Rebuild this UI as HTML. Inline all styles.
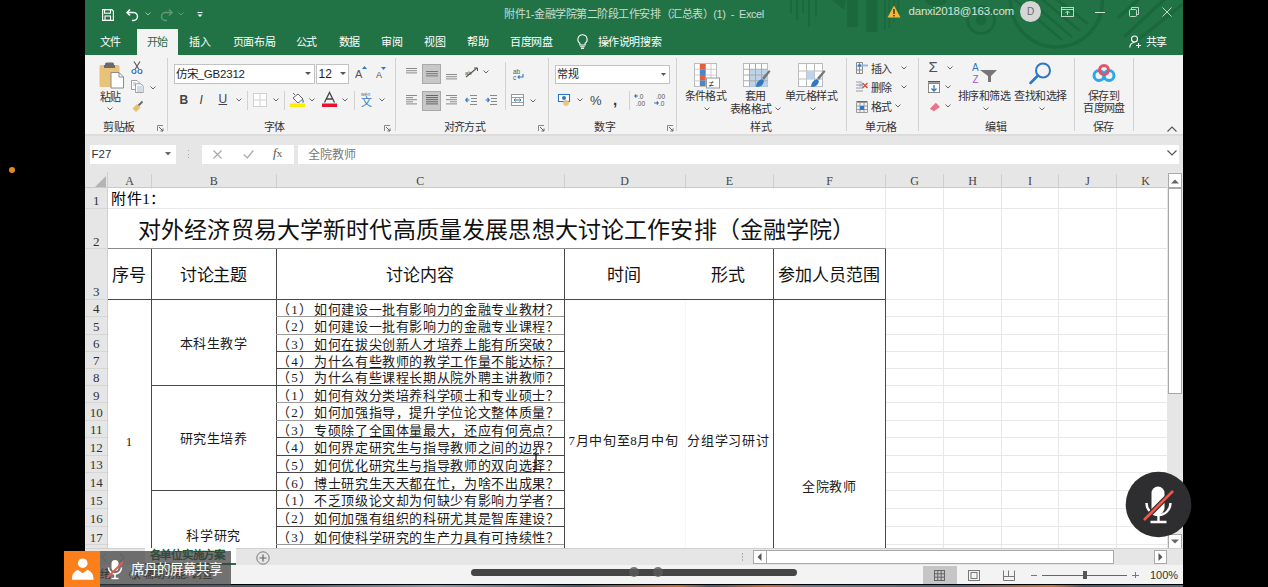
<!DOCTYPE html><html lang="zh-CN"><head><meta charset="utf-8"><style>
*{margin:0;padding:0;box-sizing:border-box}
html,body{width:1268px;height:587px;overflow:hidden}
body{background:#000;position:relative;font-family:"Liberation Sans",sans-serif;color:#262626}
.a{position:absolute}
.t{white-space:nowrap}
.ser{font-family:"Liberation Serif",serif}
svg{position:absolute;overflow:visible}
</style></head><body>
<div class="a" style="left:9px;top:167px;width:6px;height:6px;border-radius:50%;background:#e58a1c"></div>
<div class="a" style="left:85px;top:0px;width:1098px;height:55px;background:#217346"></div>
<svg style="left:0;top:0" width="1183" height="55" viewBox="0 0 1183 55">
<defs><clipPath id="tb"><rect x="85" y="0" width="1098" height="55"/></clipPath></defs>
<g clip-path="url(#tb)" fill="#1c683d">
<rect x="790" y="0" width="2" height="13"/><rect x="796" y="0" width="2.2" height="20"/><rect x="802" y="0" width="2" height="13"/><rect x="808" y="0" width="2" height="27"/><rect x="815" y="0" width="2" height="17"/>
<path d="M832 0h14l-2 10z"/>
<rect x="847" y="0" width="11" height="27"/><rect x="866" y="0" width="11.5" height="32"/>
<rect x="884" y="0" width="1.6" height="30"/><rect x="888.5" y="0" width="1.6" height="28"/><rect x="893" y="0" width="1.6" height="22"/><rect x="897.5" y="0" width="1.6" height="18"/>
<ellipse cx="936" cy="0" rx="11" ry="6"/>
<circle cx="981" cy="20" r="5.3"/>
</g>
<g clip-path="url(#tb)" fill="none" stroke="#1c683d">
<circle cx="981" cy="20" r="13.5" stroke-width="3"/>
<circle cx="1056.5" cy="1" r="46" stroke-width="3.5"/>
<path d="M1013 -2L1062 40M1022 -6L1072 37M1031 -10L1080 31M1040 -14L1088 24" stroke-width="2.6"/>
<path d="M1142 -4L1118 18M1168 -4L1124 37M1183 4L1135 42" stroke-width="3.5"/>
</g></svg>
<svg style="left:102px;top:9px" width="12" height="12" viewBox="0 0 12 12"><path d="M0.6 0.6h9.2l1.6 1.6v9.2H0.6z" fill="none" stroke="#fff" stroke-width="1.2"/><rect x="2.5" y="0.6" width="6" height="3.6" fill="none" stroke="#fff" stroke-width="1.1"/><rect x="3" y="7" width="5.5" height="4.4" fill="none" stroke="#fff" stroke-width="1.1"/></svg>
<svg style="left:126px;top:8px" width="13" height="13" viewBox="0 0 13 13"><path d="M4 1.5L1 4.5l3 3" fill="none" stroke="#fff" stroke-width="1.5"/><path d="M1.5 4.5h6a4 4 0 0 1 0 8h-1.5" fill="none" stroke="#fff" stroke-width="1.5"/></svg>
<svg style="left:145px;top:12px" width="6" height="4" viewBox="0 0 6 4"><path d="M0.5 0.5l2.5 2.5 2.5-2.5" fill="none" stroke="#9fc5ad" stroke-width="1"/></svg>
<svg style="left:160px;top:8px" width="13" height="13" viewBox="0 0 13 13"><path d="M9 1.5l3 3-3 3" fill="none" stroke="#5e9a78" stroke-width="1.5"/><path d="M11.5 4.5h-6a4 4 0 0 0 0 8h1.5" fill="none" stroke="#5e9a78" stroke-width="1.5"/></svg>
<svg style="left:178px;top:12px" width="6" height="4" viewBox="0 0 6 4"><path d="M0.5 0.5l2.5 2.5 2.5-2.5" fill="none" stroke="#5e9a78" stroke-width="1"/></svg>
<svg style="left:197px;top:12px" width="6" height="6" viewBox="0 0 6 6"><rect x="0.5" y="0" width="5" height="1" fill="#fff"/><path d="M0.5 2.5h5L3 5z" fill="#fff"/></svg>
<div class="a t" style="left:504px;top:9px;font-size:11px;line-height:11px;color:#c9ddd0;letter-spacing:-0.45px">附件1-金融学院第二阶段工作安排（汇总表）(1)&nbsp; -&nbsp; Excel</div>
<svg style="left:887px;top:5px" width="14" height="13" viewBox="0 0 14 13"><path d="M7 0.5L13.5 12.5H0.5z" fill="#f5b63c"/><rect x="6.3" y="4" width="1.4" height="5" fill="#3a2a00"/><rect x="6.3" y="10" width="1.4" height="1.4" fill="#3a2a00"/></svg>
<div class="a t" style="left:908.5px;top:6px;font-size:11.5px;line-height:11.5px;color:#d5e5da;letter-spacing:-0.2px">danxi2018@163.com</div>
<div class="a" style="left:1020px;top:1px;width:21px;height:21px;border-radius:50%;background:#d6d6d6;color:#6a6a6a;font-size:10px;line-height:21px;text-align:center">D</div>
<svg style="left:1061px;top:7px" width="13" height="10" viewBox="0 0 13 10"><rect x="0.5" y="0.5" width="12" height="9" fill="none" stroke="#d0e2d6" stroke-width="0.9" stroke-width="1"/><line x1="0.5" y1="2.5" x2="12.5" y2="2.5" stroke="#d0e2d6" stroke-width="0.9"/><path d="M6.5 8V4M4.5 6l2-2 2 2" fill="none" stroke="#d0e2d6" stroke-width="0.9"/></svg>
<div class="a" style="left:1095px;top:12px;width:10px;height:1px;background:#d0e2d6"></div>
<svg style="left:1129px;top:7px" width="10" height="10" viewBox="0 0 10 10"><rect x="0.5" y="2.5" width="7" height="7" rx="1" fill="none" stroke="#d0e2d6" stroke-width="0.9"/><path d="M2.5 2.5V0.5h7v7h-2" fill="none" stroke="#d0e2d6" stroke-width="0.9"/></svg>
<svg style="left:1162px;top:7px" width="10" height="10" viewBox="0 0 10 10"><path d="M0.5 0.5l9 9M9.5 0.5l-9 9" stroke="#d0e2d6" stroke-width="0.9"/></svg>
<div class="a" style="left:137px;top:29px;width:41px;height:26px;background:#f3f3f3"></div>
<div class="a t" style="left:99.8px;top:36.8px;font-size:11px;line-height:11px;color:#fff;letter-spacing:-0.4px">文件</div>
<div class="a t" style="left:146.5px;top:36.8px;font-size:11px;line-height:11px;color:#2b6a44;letter-spacing:-0.4px">开始</div>
<div class="a t" style="left:189.2px;top:36.8px;font-size:11px;line-height:11px;color:#fff;letter-spacing:-0.4px">插入</div>
<div class="a t" style="left:232.8px;top:36.8px;font-size:11px;line-height:11px;color:#fff;letter-spacing:-0.4px">页面布局</div>
<div class="a t" style="left:295.5px;top:36.8px;font-size:11px;line-height:11px;color:#fff;letter-spacing:-0.4px">公式</div>
<div class="a t" style="left:338.5px;top:36.8px;font-size:11px;line-height:11px;color:#fff;letter-spacing:-0.4px">数据</div>
<div class="a t" style="left:381.2px;top:36.8px;font-size:11px;line-height:11px;color:#fff;letter-spacing:-0.4px">审阅</div>
<div class="a t" style="left:424.2px;top:36.8px;font-size:11px;line-height:11px;color:#fff;letter-spacing:-0.4px">视图</div>
<div class="a t" style="left:467.2px;top:36.8px;font-size:11px;line-height:11px;color:#fff;letter-spacing:-0.4px">帮助</div>
<div class="a t" style="left:510.3px;top:36.8px;font-size:11px;line-height:11px;color:#fff;letter-spacing:-0.4px">百度网盘</div>
<div class="a t" style="left:597.5px;top:36.8px;font-size:11px;line-height:11px;color:#fff;letter-spacing:-0.4px">操作说明搜索</div>
<svg style="left:577px;top:34px" width="11" height="15" viewBox="0 0 11 15"><path d="M5.5 0.8a4.6 4.6 0 0 0-2.6 8.4V11h5.2V9.2a4.6 4.6 0 0 0-2.6-8.4z" fill="none" stroke="#fff" stroke-width="1.1"/><path d="M3.3 12.8h4.4M4 14.4h3" stroke="#fff" stroke-width="1.1"/></svg>
<svg style="left:1129px;top:35px" width="13" height="13" viewBox="0 0 13 13"><circle cx="5.5" cy="4" r="3" fill="none" stroke="#fff" stroke-width="1.1"/><path d="M0.8 12.5c0-3 2-5 4.7-5" fill="none" stroke="#fff" stroke-width="1.1"/><path d="M9.5 8v5M7 10.5h5" stroke="#fff" stroke-width="1.1"/></svg>
<div class="a t" style="left:1145.5px;top:37px;font-size:11px;line-height:11px;color:#fff;letter-spacing:-0.3px">共享</div>
<div class="a" style="left:85px;top:55px;width:1098px;height:79px;background:#f3f3f3"></div>
<div class="a" style="left:85px;top:134px;width:1098px;height:38px;background:#e6e6e6"></div>
<div class="a" style="left:85px;top:134px;width:1098px;height:1.5px;background:#dcdcdc"></div>
<svg style="left:99px;top:62px" width="26" height="27" viewBox="0 0 26 27">
<rect x="0.5" y="3" width="20" height="22" rx="1.5" fill="#e9c27a"/>
<path d="M6 3.5h9v-1.5a1.5 1.5 0 0 0-1.5-1.5h-6a1.5 1.5 0 0 0-1.5 1.5z" fill="#6b6b6b"/>
<rect x="5" y="3" width="11" height="3" fill="#6b6b6b"/>
<path d="M12 10.5h8l4.5 4.5v11h-12.5z" fill="#fff" stroke="#8a8a8a" stroke-width="1"/>
<path d="M20 10.5v4.5h4.5" fill="none" stroke="#8a8a8a" stroke-width="1"/>
</svg>
<div class="a t" style="left:90.0px;top:91.8px;font-size:11px;line-height:11px;width:40px;text-align:center;color:#333;letter-spacing:-0.6px">粘贴</div>
<svg style="left:107px;top:107px" width="6" height="4" viewBox="0 0 6 4"><path d="M0.5 0.5l2.5 2.5 2.5-2.5" fill="none" stroke="#666" stroke-width="1"/></svg>
<svg style="left:131px;top:61px" width="12" height="13" viewBox="0 0 12 13"><path d="M3 0.5l5 8M9 0.5l-5 8" stroke="#555" stroke-width="1.1"/><circle cx="3" cy="10.5" r="2" fill="none" stroke="#2f78c4" stroke-width="1.2"/><circle cx="9" cy="10.5" r="2" fill="none" stroke="#2f78c4" stroke-width="1.2"/></svg>
<svg style="left:131px;top:80px" width="13" height="13" viewBox="0 0 13 13"><path d="M0.5 0.5h5.5l2 2v7h-7.5z" fill="#fff" stroke="#8a8a8a" stroke-width="0.8"/><path d="M2 3h3M2 5h4" stroke="#9bb8d8"/><path d="M4.5 3.8h5.5l2.2 2.2v6.5h-7.7z" fill="#fff" stroke="#8a8a8a" stroke-width="0.8"/><path d="M6 7h5M6 9h5M6 11h5" stroke="#9bb8d8" stroke-width="1"/></svg>
<svg style="left:150px;top:86px" width="6" height="4" viewBox="0 0 6 4"><path d="M0.5 0.5l2.5 2.5 2.5-2.5" fill="none" stroke="#666" stroke-width="1"/></svg>
<svg style="left:132px;top:101px" width="12" height="11" viewBox="0 0 12 11"><path d="M0.5 7.5l4.5-4.5 3.5 3.5-4.5 4.5z" fill="#e9c06a"/><path d="M6.5 4.5l4-4" stroke="#666" stroke-width="1.8"/></svg>
<div class="a t" style="left:78.9px;top:121.5px;font-size:11px;line-height:11px;width:80px;text-align:center;color:#333;letter-spacing:-0.6px">剪贴板</div>
<svg style="left:157px;top:125px" width="7" height="7" viewBox="0 0 7 7"><path d="M0.5 6V0.5H6" fill="none" stroke="#888" stroke-width="1"/><path d="M2 2l4 4M6 3.5V6H3.5" fill="none" stroke="#666" stroke-width="1"/></svg>
<div class="a" style="left:167px;top:58px;width:1px;height:73px;background:#d2d2d2"></div>
<div class="a" style="left:174px;top:64px;width:141px;height:20px;background:#fff;border:1px solid #c3c3c3"></div>
<div class="a t" style="left:176px;top:68.5px;font-size:11.5px;line-height:11.5px;color:#222;letter-spacing:-0.2px">仿宋_GB2312</div>
<svg style="left:305px;top:72px" width="6" height="4" viewBox="0 0 6 4"><path d="M0 0h6L3 3z" fill="#555"/></svg>
<div class="a" style="left:316px;top:64px;width:33px;height:20px;background:#fff;border:1px solid #c3c3c3"></div>
<div class="a t" style="left:318.5px;top:68px;font-size:12px;line-height:12px;color:#222">12</div>
<svg style="left:340px;top:72px" width="6" height="4" viewBox="0 0 6 4"><path d="M0 0h6L3 3z" fill="#555"/></svg>
<div class="a t" style="left:355px;top:68.5px;font-size:11px;line-height:11px;color:#555">A</div>
<svg style="left:362px;top:66px" width="5" height="3" viewBox="0 0 5 3"><path d="M0 3L2.5 0 5 3z" fill="#2f78c4"/></svg>
<div class="a t" style="left:376px;top:71px;font-size:9px;line-height:9px;color:#555">A</div>
<svg style="left:381px;top:67px" width="5" height="3" viewBox="0 0 5 3"><path d="M0 0h5L2.5 3z" fill="#2f78c4"/></svg>
<div class="a t" style="left:179.5px;top:93.5px;font-size:12px;line-height:12px;color:#444;font-weight:bold">B</div>
<div class="a t" style="left:199.5px;top:93.5px;font-size:12px;line-height:12px;color:#444;font-style:italic;font-family:&quot;Liberation Sans&quot;,sans-serif">I</div>
<div class="a t" style="left:218.5px;top:93px;font-size:12px;line-height:12px;color:#444;text-decoration:underline">U</div>
<svg style="left:236px;top:98px" width="6" height="4" viewBox="0 0 6 4"><path d="M0.5 0.5l2.5 2.5 2.5-2.5" fill="none" stroke="#666" stroke-width="1"/></svg>
<div class="a" style="left:247px;top:91px;width:1px;height:19px;background:#d2d2d2"></div>
<svg style="left:253px;top:93px" width="14" height="14" viewBox="0 0 14 14"><rect x="0.5" y="0.5" width="13" height="13" fill="#fff" stroke="#d0d0d0"/><path d="M7 0.5v13M0.5 7h13" stroke="#d0d0d0"/></svg>
<svg style="left:273px;top:98px" width="6" height="4" viewBox="0 0 6 4"><path d="M0.5 0.5l2.5 2.5 2.5-2.5" fill="none" stroke="#666" stroke-width="1"/></svg>
<div class="a" style="left:284px;top:91px;width:1px;height:19px;background:#d2d2d2"></div>
<svg style="left:290px;top:92px" width="15" height="16" viewBox="0 0 15 16"><path d="M3 6l5-4 5 5-5 4z" fill="#fff" stroke="#666"/><path d="M5 3L3 1" stroke="#666"/><path d="M12.5 7.5q1.5 2 0 3" fill="none" stroke="#2f78c4" stroke-width="1.2"/><rect x="0" y="11.5" width="15" height="3.5" fill="#ffeb00"/></svg>
<svg style="left:309px;top:98px" width="6" height="4" viewBox="0 0 6 4"><path d="M0.5 0.5l2.5 2.5 2.5-2.5" fill="none" stroke="#666" stroke-width="1"/></svg>
<svg style="left:322px;top:92px" width="15" height="16" viewBox="0 0 15 16"><path d="M2.5 10.5L7.5 0.5 12.5 10.5M4.5 7h6" fill="none" stroke="#444" stroke-width="1.3"/><rect x="0" y="11.5" width="15" height="3.5" fill="#e8112d"/></svg>
<svg style="left:342px;top:98px" width="6" height="4" viewBox="0 0 6 4"><path d="M0.5 0.5l2.5 2.5 2.5-2.5" fill="none" stroke="#666" stroke-width="1"/></svg>
<div class="a" style="left:354px;top:91px;width:1px;height:19px;background:#d2d2d2"></div>
<div class="a t" style="left:361px;top:92px;font-size:5px;line-height:5px;color:#666">wén</div>
<div class="a t" style="left:361px;top:97px;font-size:11px;line-height:11px;color:#2f78c4">文</div>
<svg style="left:379px;top:98px" width="6" height="4" viewBox="0 0 6 4"><path d="M0.5 0.5l2.5 2.5 2.5-2.5" fill="none" stroke="#666" stroke-width="1"/></svg>
<div class="a t" style="left:234.25px;top:121.5px;font-size:11px;line-height:11px;width:80px;text-align:center;color:#333;letter-spacing:-0.6px">字体</div>
<svg style="left:384px;top:125px" width="7" height="7" viewBox="0 0 7 7"><path d="M0.5 6V0.5H6" fill="none" stroke="#888" stroke-width="1"/><path d="M2 2l4 4M6 3.5V6H3.5" fill="none" stroke="#666" stroke-width="1"/></svg>
<div class="a" style="left:395px;top:58px;width:1px;height:73px;background:#d2d2d2"></div>
<svg style="left:406px;top:68px" width="11" height="6.6000000000000005" viewBox="0 0 11 6.6000000000000005"><rect x="0" y="0.0" width="11" height="1" fill="#8a8a8a"/><rect x="0" y="2.2" width="11" height="1" fill="#8a8a8a"/><rect x="0" y="4.4" width="11" height="1" fill="#8a8a8a"/></svg>
<div class="a" style="left:422px;top:64px;width:19px;height:20px;background:#c8c8c8;border:1px solid #a9a9a9"></div>
<svg style="left:425.5px;top:71px" width="12" height="6.6000000000000005" viewBox="0 0 12 6.6000000000000005"><rect x="0" y="0.0" width="12" height="1" fill="#777"/><rect x="0" y="2.2" width="12" height="1" fill="#777"/><rect x="0" y="4.4" width="12" height="1" fill="#777"/></svg>
<svg style="left:446px;top:74px" width="11" height="6.6000000000000005" viewBox="0 0 11 6.6000000000000005"><rect x="0" y="0.0" width="11" height="1" fill="#8a8a8a"/><rect x="0" y="2.2" width="11" height="1" fill="#8a8a8a"/><rect x="0" y="4.4" width="11" height="1" fill="#8a8a8a"/></svg>
<svg style="left:465px;top:67px" width="14" height="12" viewBox="0 0 14 12"><path d="M1 10L12 1" stroke="#555" stroke-width="1.1"/><path d="M9 1h3.5v3" fill="none" stroke="#555"/><text x="0" y="8" font-size="6" fill="#555" font-family="Liberation Sans">ab</text></svg>
<svg style="left:483px;top:70px" width="6" height="4" viewBox="0 0 6 4"><path d="M0.5 0.5l2.5 2.5 2.5-2.5" fill="none" stroke="#666" stroke-width="1"/></svg>
<div class="a" style="left:505px;top:62px;width:1px;height:48px;background:#d2d2d2"></div>
<div class="a t" style="left:513px;top:68px;font-size:6.5px;line-height:6.5px;color:#555;line-height:7px">ab</div>
<div class="a t" style="left:513px;top:73.5px;font-size:6.5px;line-height:6.5px;color:#555;line-height:7px">c</div>
<svg style="left:517px;top:74px" width="7" height="6" viewBox="0 0 7 6"><path d="M6 0v3H1M2.5 1.5L1 3l1.5 1.5" fill="none" stroke="#2f78c4" stroke-width="1.1"/></svg>
<svg style="left:406px;top:95px" width="11" height="10.5" viewBox="0 0 11 10.5"><rect x="0" y="0.0" width="11" height="1" fill="#8a8a8a"/><rect x="0" y="2.1" width="7" height="1" fill="#8a8a8a"/><rect x="0" y="4.2" width="11" height="1" fill="#8a8a8a"/><rect x="0" y="6.300000000000001" width="7" height="1" fill="#8a8a8a"/><rect x="0" y="8.4" width="11" height="1" fill="#8a8a8a"/></svg>
<div class="a" style="left:422px;top:90.5px;width:19px;height:20px;background:#c8c8c8;border:1px solid #a9a9a9"></div>
<svg style="left:425.5px;top:95px" width="12" height="10.5" viewBox="0 0 12 10.5"><rect x="0" y="0.0" width="12" height="1" fill="#666"/><rect x="0" y="2.1" width="12" height="1" fill="#666"/><rect x="0" y="4.2" width="12" height="1" fill="#666"/><rect x="0" y="6.300000000000001" width="12" height="1" fill="#666"/><rect x="0" y="8.4" width="12" height="1" fill="#666"/></svg>
<svg style="left:446px;top:95px" width="11" height="11" viewBox="0 0 11 11"><path d="M0 0.5h11M4 2.6h7M0 4.7h11M4 6.8h7M0 8.9h11" stroke="#8a8a8a"/></svg>
<svg style="left:465px;top:95px" width="12" height="10" viewBox="0 0 12 10"><path d="M5 0.5h7M6 3.5h6M6 6.5h6M5 9.5h7" stroke="#8a8a8a"/><path d="M4.5 5H0.8M2.5 3L0.8 5l1.7 2" fill="none" stroke="#2f78c4" stroke-width="1.2"/></svg>
<svg style="left:485px;top:95px" width="12" height="10" viewBox="0 0 12 10"><path d="M5 0.5h7M6 3.5h6M6 6.5h6M5 9.5h7" stroke="#8a8a8a"/><path d="M0.5 5H4.2M2.5 3L4.2 5l-1.7 2" fill="none" stroke="#2f78c4" stroke-width="1.2"/></svg>
<svg style="left:511px;top:94px" width="13" height="12" viewBox="0 0 13 12"><rect x="0.5" y="0.5" width="12" height="11" fill="#fff" stroke="#999"/><path d="M0.5 3.5h12M0.5 8.5h12" stroke="#999"/><path d="M3 6h7M4.5 4.5L3 6l1.5 1.5M8.5 4.5L10 6 8.5 7.5" fill="none" stroke="#2f78c4"/></svg>
<svg style="left:530px;top:99px" width="6" height="4" viewBox="0 0 6 4"><path d="M0.5 0.5l2.5 2.5 2.5-2.5" fill="none" stroke="#666" stroke-width="1"/></svg>
<div class="a t" style="left:424.5px;top:121.5px;font-size:11px;line-height:11px;width:80px;text-align:center;color:#333;letter-spacing:-0.6px">对齐方式</div>
<svg style="left:538px;top:125px" width="7" height="7" viewBox="0 0 7 7"><path d="M0.5 6V0.5H6" fill="none" stroke="#888" stroke-width="1"/><path d="M2 2l4 4M6 3.5V6H3.5" fill="none" stroke="#666" stroke-width="1"/></svg>
<div class="a" style="left:548px;top:58px;width:1px;height:73px;background:#d2d2d2"></div>
<div class="a" style="left:555px;top:64.5px;width:115px;height:19.5px;background:#fff;border:1px solid #c3c3c3"></div>
<div class="a t" style="left:557px;top:68.5px;font-size:11px;line-height:11px;color:#222">常规</div>
<svg style="left:661px;top:72.5px" width="5" height="3" viewBox="0 0 5 3"><path d="M0 0h5L2.5 3z" fill="#555"/></svg>
<svg style="left:558px;top:94px" width="13" height="12" viewBox="0 0 13 12"><rect x="0.5" y="0.5" width="11" height="7" fill="#fff" stroke="#2f78c4" stroke-width="1.1"/><circle cx="6" cy="4" r="2" fill="#2f78c4"/><circle cx="8" cy="9" r="3" fill="#e9c27a" opacity="0.9"/></svg>
<svg style="left:577px;top:98px" width="6" height="4" viewBox="0 0 6 4"><path d="M0.5 0.5l2.5 2.5 2.5-2.5" fill="none" stroke="#666" stroke-width="1"/></svg>
<div class="a t" style="left:590px;top:93.5px;font-size:13px;line-height:13px;color:#444">%</div>
<div class="a t" style="left:613px;top:92px;font-size:15px;line-height:15px;color:#333;font-weight:bold">,</div>
<div class="a" style="left:629px;top:91px;width:1px;height:19px;background:#d2d2d2"></div>
<svg style="left:634px;top:93px" width="13" height="13" viewBox="0 0 13 13"><text x="4" y="6" font-size="6.5" fill="#555" font-family="Liberation Sans">.0</text><text x="2" y="12.5" font-size="6.5" fill="#555" font-family="Liberation Sans">.00</text><path d="M4 3H0.8M2.2 1.5L0.8 3l1.4 1.5" fill="none" stroke="#2f78c4" stroke-width="1.1"/></svg>
<svg style="left:653px;top:93px" width="13" height="13" viewBox="0 0 13 13"><text x="3" y="6" font-size="6.5" fill="#555" font-family="Liberation Sans">.00</text><text x="6" y="12.5" font-size="6.5" fill="#555" font-family="Liberation Sans">.0</text><path d="M1 10h4M3.8 8.5L5.2 10l-1.4 1.5" fill="none" stroke="#2f78c4" stroke-width="1.1"/></svg>
<div class="a t" style="left:564.9px;top:121.5px;font-size:11px;line-height:11px;width:80px;text-align:center;color:#333;letter-spacing:-0.6px">数字</div>
<svg style="left:667px;top:125px" width="7" height="7" viewBox="0 0 7 7"><path d="M0.5 6V0.5H6" fill="none" stroke="#888" stroke-width="1"/><path d="M2 2l4 4M6 3.5V6H3.5" fill="none" stroke="#666" stroke-width="1"/></svg>
<div class="a" style="left:676px;top:58px;width:1px;height:73px;background:#d2d2d2"></div>
<svg style="left:694px;top:63px" width="28" height="26" viewBox="0 0 28 26"><rect x="0.5" y="0.5" width="22" height="23" fill="#fff" stroke="#bbb"/><line x1="6.0" y1="0.5" x2="6.0" y2="23.5" stroke="#ccc"/><line x1="11.5" y1="0.5" x2="11.5" y2="23.5" stroke="#ccc"/><line x1="17.0" y1="0.5" x2="17.0" y2="23.5" stroke="#ccc"/><line x1="0.5" y1="6.25" x2="22.5" y2="6.25" stroke="#ccc"/><line x1="0.5" y1="12.0" x2="22.5" y2="12.0" stroke="#ccc"/><line x1="0.5" y1="17.75" x2="22.5" y2="17.75" stroke="#ccc"/><rect x="6" y="1" width="5.5" height="5.5" fill="#e0603b"/><rect x="6" y="6.5" width="5.5" height="5.5" fill="#4a86c8"/><rect x="6" y="12" width="5.5" height="5.5" fill="#e0603b"/><rect x="6" y="17.5" width="5.5" height="5.5" fill="#4a86c8"/><rect x="12.5" y="15" width="13" height="10" fill="#fff" stroke="#999"/><text x="15" y="23.5" font-size="9" fill="#333" font-family="Liberation Sans">≠</text></svg>
<div class="a t" style="left:675.5px;top:90.5px;font-size:11px;line-height:11px;width:60px;text-align:center;color:#333;letter-spacing:-0.6px">条件格式</div>
<svg style="left:704px;top:107px" width="6" height="4" viewBox="0 0 6 4"><path d="M0.5 0.5l2.5 2.5 2.5-2.5" fill="none" stroke="#666" stroke-width="1"/></svg>
<svg style="left:743px;top:63px" width="28" height="26" viewBox="0 0 28 26"><rect x="0.5" y="0.5" width="24" height="23" fill="#fff" stroke="#bbb"/><rect x="6.5" y="6.5" width="18" height="17" fill="#bcd3ea"/><line x1="6.5" y1="0.5" x2="6.5" y2="23.5" stroke="#aaa"/><line x1="12.5" y1="0.5" x2="12.5" y2="23.5" stroke="#aaa"/><line x1="18.5" y1="0.5" x2="18.5" y2="23.5" stroke="#aaa"/><line x1="0.5" y1="6.25" x2="24.5" y2="6.25" stroke="#aaa"/><line x1="0.5" y1="12.0" x2="24.5" y2="12.0" stroke="#aaa"/><line x1="0.5" y1="17.75" x2="24.5" y2="17.75" stroke="#aaa"/><path d="M19 15l7-8 1.5 1.5-6.5 8.5z" fill="#777"/><path d="M13 24q0-6 6-8l2 2q-1 6-8 6z" fill="#2f78c4"/></svg>
<div class="a t" style="left:735.5px;top:90.5px;font-size:11px;line-height:11px;width:40px;text-align:center;color:#333;letter-spacing:-0.6px">套用</div>
<div class="a t" style="left:720.7px;top:103.5px;font-size:11px;line-height:11px;width:60px;text-align:center;color:#333;letter-spacing:-0.6px">表格格式</div>
<svg style="left:775px;top:107px" width="6" height="4" viewBox="0 0 6 4"><path d="M0.5 0.5l2.5 2.5 2.5-2.5" fill="none" stroke="#666" stroke-width="1"/></svg>
<svg style="left:798px;top:63px" width="28" height="26" viewBox="0 0 28 26"><rect x="0.5" y="0.5" width="24" height="23" fill="#fff" stroke="#bbb"/><line x1="8.5" y1="0.5" x2="8.5" y2="23.5" stroke="#bbb"/><line x1="16.5" y1="0.5" x2="16.5" y2="23.5" stroke="#bbb"/><line x1="0.5" y1="8" x2="24.5" y2="8" stroke="#bbb"/><line x1="0.5" y1="16" x2="24.5" y2="16" stroke="#bbb"/><rect x="8.5" y="8" width="8" height="8" fill="#bcd3ea"/><path d="M19 15l7-8 1.5 1.5-6.5 8.5z" fill="#777"/><path d="M13 24q0-6 6-8l2 2q-1 6-8 6z" fill="#2f78c4"/></svg>
<div class="a t" style="left:776.0px;top:90.5px;font-size:11px;line-height:11px;width:70px;text-align:center;color:#333;letter-spacing:-0.6px">单元格样式</div>
<svg style="left:810px;top:107px" width="6" height="4" viewBox="0 0 6 4"><path d="M0.5 0.5l2.5 2.5 2.5-2.5" fill="none" stroke="#666" stroke-width="1"/></svg>
<div class="a t" style="left:720.75px;top:121.5px;font-size:11px;line-height:11px;width:80px;text-align:center;color:#333;letter-spacing:-0.6px">样式</div>
<div class="a" style="left:846px;top:58px;width:1px;height:73px;background:#d2d2d2"></div>
<svg style="left:856px;top:62px" width="12" height="12" viewBox="0 0 12 12"><path d="M0.5 0.5h6v11h-6zM0.5 4h6M0.5 8h6M3.5 0.5v11" fill="none" stroke="#8a8a8a"/><path d="M2 3.5h10" stroke="#9bb8d8" stroke-width="2"/><path d="M2 3.5h3" stroke="#2f78c4" stroke-width="2"/></svg>
<div class="a t" style="left:870.5px;top:63.5px;font-size:11px;line-height:11px;color:#333;letter-spacing:-0.6px">插入</div>
<svg style="left:901px;top:66px" width="6" height="4" viewBox="0 0 6 4"><path d="M0.5 0.5l2.5 2.5 2.5-2.5" fill="none" stroke="#666" stroke-width="1"/></svg>
<svg style="left:856px;top:81px" width="12" height="12" viewBox="0 0 12 12"><path d="M0 1h6M0 4h7M0 7h7M0 10h7" stroke="#9a9a9a"/><rect x="3" y="2.5" width="4" height="3" fill="#9bb8d8"/><path d="M6.5 2l5 5M11.5 2l-5 5" stroke="#e0443a" stroke-width="1.3"/></svg>
<div class="a t" style="left:870.5px;top:82.5px;font-size:11px;line-height:11px;color:#333;letter-spacing:-0.6px">删除</div>
<svg style="left:901px;top:85px" width="6" height="4" viewBox="0 0 6 4"><path d="M0.5 0.5l2.5 2.5 2.5-2.5" fill="none" stroke="#666" stroke-width="1"/></svg>
<svg style="left:856px;top:100.5px" width="12" height="12" viewBox="0 0 12 12"><path d="M0.5 1.5h11v10h-11zM0.5 5h11M0.5 8.5h11M4 1.5v10M8 1.5v10" fill="none" stroke="#9a9a9a"/><path d="M0.5 0.5h11" stroke="#2f78c4"/><rect x="4" y="5" width="4" height="4" fill="#2f78c4"/></svg>
<div class="a t" style="left:870.5px;top:101.5px;font-size:11px;line-height:11px;color:#333;letter-spacing:-0.6px">格式</div>
<svg style="left:895px;top:104px" width="6" height="4" viewBox="0 0 6 4"><path d="M0.5 0.5l2.5 2.5 2.5-2.5" fill="none" stroke="#666" stroke-width="1"/></svg>
<div class="a t" style="left:841.0px;top:121.5px;font-size:11px;line-height:11px;width:80px;text-align:center;color:#333;letter-spacing:-0.6px">单元格</div>
<div class="a" style="left:917.5px;top:58px;width:1px;height:73px;background:#d2d2d2"></div>
<div class="a t" style="left:928.5px;top:58.5px;font-size:15px;line-height:15px;color:#505050">Σ</div>
<svg style="left:947px;top:66px" width="6" height="4" viewBox="0 0 6 4"><path d="M0.5 0.5l2.5 2.5 2.5-2.5" fill="none" stroke="#666" stroke-width="1"/></svg>
<svg style="left:928px;top:80.5px" width="12" height="12" viewBox="0 0 12 12"><rect x="0.5" y="2.5" width="11" height="9" fill="#fff" stroke="#888"/><rect x="0" y="0" width="12" height="1.5" fill="#555"/><path d="M6 4v6M3.5 7.5L6 10l2.5-2.5" fill="none" stroke="#2f78c4" stroke-width="1.3"/></svg>
<svg style="left:945px;top:85px" width="6" height="4" viewBox="0 0 6 4"><path d="M0.5 0.5l2.5 2.5 2.5-2.5" fill="none" stroke="#666" stroke-width="1"/></svg>
<svg style="left:929px;top:101.5px" width="12" height="10" viewBox="0 0 12 10"><path d="M0.8 6.8L6.8 0.8l4.2 4.2-6 4.2z" fill="#e8748a"/></svg>
<svg style="left:945px;top:104px" width="6" height="4" viewBox="0 0 6 4"><path d="M0.5 0.5l2.5 2.5 2.5-2.5" fill="none" stroke="#666" stroke-width="1"/></svg>
<svg style="left:972px;top:62px" width="26" height="23" viewBox="0 0 26 23"><text x="0" y="9" font-size="10" fill="#2f78c4" font-family="Liberation Sans">A</text><text x="0.5" y="21" font-size="10" fill="#9b59c4" font-family="Liberation Sans">Z</text><path d="M8 8h17l-6 6v6h-3v-6z" fill="#777"/></svg>
<div class="a t" style="left:949.0px;top:90.8px;font-size:11px;line-height:11px;width:70px;text-align:center;color:#333;letter-spacing:-0.6px">排序和筛选</div>
<svg style="left:983px;top:107px" width="6" height="4" viewBox="0 0 6 4"><path d="M0.5 0.5l2.5 2.5 2.5-2.5" fill="none" stroke="#666" stroke-width="1"/></svg>
<svg style="left:1029px;top:62px" width="23" height="23" viewBox="0 0 23 23"><circle cx="14" cy="8.5" r="7" fill="none" stroke="#2f78c4" stroke-width="2"/><path d="M9 13.5L1.5 21" stroke="#2f78c4" stroke-width="2.6" stroke-linecap="round"/></svg>
<div class="a t" style="left:1005.5px;top:90.8px;font-size:11px;line-height:11px;width:70px;text-align:center;color:#333;letter-spacing:-0.6px">查找和选择</div>
<svg style="left:1039px;top:107px" width="6" height="4" viewBox="0 0 6 4"><path d="M0.5 0.5l2.5 2.5 2.5-2.5" fill="none" stroke="#666" stroke-width="1"/></svg>
<div class="a t" style="left:955.75px;top:121.5px;font-size:11px;line-height:11px;width:80px;text-align:center;color:#333;letter-spacing:-0.6px">编辑</div>
<div class="a" style="left:1074px;top:58px;width:1px;height:73px;background:#d2d2d2"></div>
<svg style="left:1092px;top:64px" width="24" height="18" viewBox="0 0 24 18"><circle cx="7" cy="11.5" r="5" fill="none" stroke="#2aa8e8" stroke-width="3"/><circle cx="17" cy="11.5" r="5" fill="none" stroke="#2aa8e8" stroke-width="3"/><circle cx="12" cy="6" r="4.5" fill="none" stroke="#e8506a" stroke-width="3"/></svg>
<div class="a t" style="left:1073.7px;top:90.7px;font-size:11px;line-height:11px;width:60px;text-align:center;color:#333;letter-spacing:-0.6px">保存到</div>
<div class="a t" style="left:1074.0px;top:103.1px;font-size:11px;line-height:11px;width:60px;text-align:center;color:#333;letter-spacing:-0.6px">百度网盘</div>
<div class="a t" style="left:1063.5px;top:121.5px;font-size:11px;line-height:11px;width:80px;text-align:center;color:#333;letter-spacing:-0.6px">保存</div>
<div class="a" style="left:1133px;top:58px;width:1px;height:73px;background:#d2d2d2"></div>
<svg style="left:1167px;top:126px" width="10" height="6" viewBox="0 0 10 6"><path d="M0.5 5.5L5 1l4.5 4.5" fill="none" stroke="#555" stroke-width="1.1"/></svg>
<div class="a" style="left:89.5px;top:144.5px;width:86px;height:19.5px;background:#fff"></div>
<div class="a t" style="left:91.5px;top:149px;font-size:11.5px;line-height:11.5px;color:#333">F27</div>
<svg style="left:165px;top:151.5px" width="6" height="4" viewBox="0 0 6 4"><path d="M0 0h6L3 3.5z" fill="#666"/></svg>
<div class="a" style="left:188.3px;top:150px;width:1.2px;height:1.4px;background:#a8a8a8"></div>
<div class="a" style="left:188.3px;top:153.5px;width:1.2px;height:1.4px;background:#a8a8a8"></div>
<div class="a" style="left:188.3px;top:157px;width:1.2px;height:1.4px;background:#a8a8a8"></div>
<div class="a" style="left:202px;top:144.5px;width:92px;height:19.5px;background:#fff"></div>
<svg style="left:213px;top:150px" width="9" height="9" viewBox="0 0 9 9"><path d="M0.5 0.5l8 8M8.5 0.5l-8 8" stroke="#a8a8a8" stroke-width="1.2"/></svg>
<svg style="left:243px;top:150px" width="11" height="9" viewBox="0 0 11 9"><path d="M0.8 4.5l3.5 3.5 6-7.5" fill="none" stroke="#b0b0b0" stroke-width="1.5"/></svg>
<div class="a t" style="left:273px;top:146px;font-size:13px;line-height:13px;color:#555;font-family:&quot;Liberation Serif&quot;,serif"><i>f</i><span style="font-size:11px">x</span></div>
<div class="a" style="left:298px;top:144.5px;width:881px;height:19.5px;background:#fff"></div>
<div class="a t" style="left:308px;top:148.5px;font-size:12px;line-height:12px;color:#777">全院教师</div>
<svg style="left:1167px;top:150px" width="10" height="6" viewBox="0 0 10 6"><path d="M0.5 0.5L5 5l4.5-4.5" fill="none" stroke="#555" stroke-width="1.2"/></svg>
<div class="a" style="left:85px;top:172px;width:1082px;height:16.4px;background:#e6e6e6"></div>
<div class="a" style="left:85px;top:187.4px;width:1082px;height:1px;background:#c9c9c9"></div>
<div class="a" style="left:85px;top:188.4px;width:23px;height:359.6px;background:#e6e6e6"></div>
<div class="a" style="left:107px;top:172px;width:1px;height:376px;background:#d0d0d0"></div>
<svg style="left:95px;top:176px" width="11" height="11" viewBox="0 0 11 11"><path d="M11 0V11H0z" fill="#b4b4b4"/></svg>
<div class="a" style="left:108px;top:188.4px;width:1059px;height:359.6px;background:#fff"></div>
<div class="a" style="left:150.8px;top:174px;width:1px;height:13.5px;background:#cfcfcf"></div>
<div class="a" style="left:275.8px;top:174px;width:1px;height:13.5px;background:#cfcfcf"></div>
<div class="a" style="left:563.9px;top:174px;width:1px;height:13.5px;background:#cfcfcf"></div>
<div class="a" style="left:684.5px;top:174px;width:1px;height:13.5px;background:#cfcfcf"></div>
<div class="a" style="left:773.1px;top:174px;width:1px;height:13.5px;background:#cfcfcf"></div>
<div class="a" style="left:885.1px;top:174px;width:1px;height:13.5px;background:#cfcfcf"></div>
<div class="a" style="left:943.3px;top:174px;width:1px;height:13.5px;background:#cfcfcf"></div>
<div class="a" style="left:1000.9px;top:174px;width:1px;height:13.5px;background:#cfcfcf"></div>
<div class="a" style="left:1058.0px;top:174px;width:1px;height:13.5px;background:#cfcfcf"></div>
<div class="a" style="left:1116.0px;top:174px;width:1px;height:13.5px;background:#cfcfcf"></div>
<div class="a t" style="left:109.65px;top:175.0px;font-size:12px;line-height:12px;width:40px;text-align:center;color:#444;font-family:&quot;Liberation Serif&quot;,serif">A</div>
<div class="a t" style="left:193.8px;top:175.0px;font-size:12px;line-height:12px;width:40px;text-align:center;color:#444;font-family:&quot;Liberation Serif&quot;,serif">B</div>
<div class="a t" style="left:400.35px;top:175.0px;font-size:12px;line-height:12px;width:40px;text-align:center;color:#444;font-family:&quot;Liberation Serif&quot;,serif">C</div>
<div class="a t" style="left:604.7px;top:175.0px;font-size:12px;line-height:12px;width:40px;text-align:center;color:#444;font-family:&quot;Liberation Serif&quot;,serif">D</div>
<div class="a t" style="left:709.3px;top:175.0px;font-size:12px;line-height:12px;width:40px;text-align:center;color:#444;font-family:&quot;Liberation Serif&quot;,serif">E</div>
<div class="a t" style="left:809.6px;top:175.0px;font-size:12px;line-height:12px;width:40px;text-align:center;color:#444;font-family:&quot;Liberation Serif&quot;,serif">F</div>
<div class="a t" style="left:894.7px;top:175.0px;font-size:12px;line-height:12px;width:40px;text-align:center;color:#444;font-family:&quot;Liberation Serif&quot;,serif">G</div>
<div class="a t" style="left:952.6px;top:175.0px;font-size:12px;line-height:12px;width:40px;text-align:center;color:#444;font-family:&quot;Liberation Serif&quot;,serif">H</div>
<div class="a t" style="left:1009.95px;top:175.0px;font-size:12px;line-height:12px;width:40px;text-align:center;color:#444;font-family:&quot;Liberation Serif&quot;,serif">I</div>
<div class="a t" style="left:1067.5px;top:175.0px;font-size:12px;line-height:12px;width:40px;text-align:center;color:#444;font-family:&quot;Liberation Serif&quot;,serif">J</div>
<div class="a t" style="left:1125.5px;top:175.0px;font-size:12px;line-height:12px;width:40px;text-align:center;color:#444;font-family:&quot;Liberation Serif&quot;,serif">K</div>
<div class="a" style="left:85px;top:207.8px;width:22px;height:1px;background:#d6d6d6"></div>
<div class="a t" style="left:85.3px;top:194.0px;font-size:13px;line-height:13px;color:#333;font-family:&quot;Liberation Serif&quot;,serif;width:22px;text-align:center">1</div>
<div class="a" style="left:85px;top:248.4px;width:22px;height:1px;background:#d6d6d6"></div>
<div class="a t" style="left:85.3px;top:234.6px;font-size:13px;line-height:13px;color:#333;font-family:&quot;Liberation Serif&quot;,serif;width:22px;text-align:center">2</div>
<div class="a" style="left:85px;top:298.9px;width:22px;height:1px;background:#d6d6d6"></div>
<div class="a t" style="left:85.3px;top:285.09999999999997px;font-size:13px;line-height:13px;color:#333;font-family:&quot;Liberation Serif&quot;,serif;width:22px;text-align:center">3</div>
<div class="a" style="left:85px;top:316.2px;width:22px;height:1px;background:#d6d6d6"></div>
<div class="a t" style="left:85.3px;top:302.4px;font-size:13px;line-height:13px;color:#333;font-family:&quot;Liberation Serif&quot;,serif;width:22px;text-align:center">4</div>
<div class="a" style="left:85px;top:333.9px;width:22px;height:1px;background:#d6d6d6"></div>
<div class="a t" style="left:85.3px;top:320.09999999999997px;font-size:13px;line-height:13px;color:#333;font-family:&quot;Liberation Serif&quot;,serif;width:22px;text-align:center">5</div>
<div class="a" style="left:85px;top:351.0px;width:22px;height:1px;background:#d6d6d6"></div>
<div class="a t" style="left:85.3px;top:337.2px;font-size:13px;line-height:13px;color:#333;font-family:&quot;Liberation Serif&quot;,serif;width:22px;text-align:center">6</div>
<div class="a" style="left:85px;top:368.0px;width:22px;height:1px;background:#d6d6d6"></div>
<div class="a t" style="left:85.3px;top:354.2px;font-size:13px;line-height:13px;color:#333;font-family:&quot;Liberation Serif&quot;,serif;width:22px;text-align:center">7</div>
<div class="a" style="left:85px;top:384.9px;width:22px;height:1px;background:#d6d6d6"></div>
<div class="a t" style="left:85.3px;top:371.09999999999997px;font-size:13px;line-height:13px;color:#333;font-family:&quot;Liberation Serif&quot;,serif;width:22px;text-align:center">8</div>
<div class="a" style="left:85px;top:402.4px;width:22px;height:1px;background:#d6d6d6"></div>
<div class="a t" style="left:85.3px;top:388.59999999999997px;font-size:13px;line-height:13px;color:#333;font-family:&quot;Liberation Serif&quot;,serif;width:22px;text-align:center">9</div>
<div class="a" style="left:85px;top:419.5px;width:22px;height:1px;background:#d6d6d6"></div>
<div class="a t" style="left:85.3px;top:405.7px;font-size:13px;line-height:13px;color:#333;font-family:&quot;Liberation Serif&quot;,serif;width:22px;text-align:center">10</div>
<div class="a" style="left:85px;top:437.1px;width:22px;height:1px;background:#d6d6d6"></div>
<div class="a t" style="left:85.3px;top:423.3px;font-size:13px;line-height:13px;color:#333;font-family:&quot;Liberation Serif&quot;,serif;width:22px;text-align:center">11</div>
<div class="a" style="left:85px;top:454.5px;width:22px;height:1px;background:#d6d6d6"></div>
<div class="a t" style="left:85.3px;top:440.7px;font-size:13px;line-height:13px;color:#333;font-family:&quot;Liberation Serif&quot;,serif;width:22px;text-align:center">12</div>
<div class="a" style="left:85px;top:472.1px;width:22px;height:1px;background:#d6d6d6"></div>
<div class="a t" style="left:85.3px;top:458.3px;font-size:13px;line-height:13px;color:#333;font-family:&quot;Liberation Serif&quot;,serif;width:22px;text-align:center">13</div>
<div class="a" style="left:85px;top:490.2px;width:22px;height:1px;background:#d6d6d6"></div>
<div class="a t" style="left:85.3px;top:476.4px;font-size:13px;line-height:13px;color:#333;font-family:&quot;Liberation Serif&quot;,serif;width:22px;text-align:center">14</div>
<div class="a" style="left:85px;top:507.8px;width:22px;height:1px;background:#d6d6d6"></div>
<div class="a t" style="left:85.3px;top:494.0px;font-size:13px;line-height:13px;color:#333;font-family:&quot;Liberation Serif&quot;,serif;width:22px;text-align:center">15</div>
<div class="a" style="left:85px;top:525.9px;width:22px;height:1px;background:#d6d6d6"></div>
<div class="a t" style="left:85.3px;top:512.1px;font-size:13px;line-height:13px;color:#333;font-family:&quot;Liberation Serif&quot;,serif;width:22px;text-align:center">16</div>
<div class="a" style="left:85px;top:544.3px;width:22px;height:1px;background:#d6d6d6"></div>
<div class="a t" style="left:85.3px;top:530.5px;font-size:13px;line-height:13px;color:#333;font-family:&quot;Liberation Serif&quot;,serif;width:22px;text-align:center">17</div>
<div class="a" style="left:85px;top:562.5px;width:22px;height:1px;background:#d6d6d6"></div>
<div class="a" style="left:108px;top:207.8px;width:1059px;height:1px;background:#e8e8e8"></div>
<div class="a" style="left:108px;top:248.4px;width:1059px;height:1px;background:#e8e8e8"></div>
<div class="a" style="left:108px;top:298.9px;width:1059px;height:1px;background:#e8e8e8"></div>
<div class="a" style="left:108px;top:316.2px;width:1059px;height:1px;background:#e8e8e8"></div>
<div class="a" style="left:108px;top:333.9px;width:1059px;height:1px;background:#e8e8e8"></div>
<div class="a" style="left:108px;top:351.0px;width:1059px;height:1px;background:#e8e8e8"></div>
<div class="a" style="left:108px;top:368.0px;width:1059px;height:1px;background:#e8e8e8"></div>
<div class="a" style="left:108px;top:384.9px;width:1059px;height:1px;background:#e8e8e8"></div>
<div class="a" style="left:108px;top:402.4px;width:1059px;height:1px;background:#e8e8e8"></div>
<div class="a" style="left:108px;top:419.5px;width:1059px;height:1px;background:#e8e8e8"></div>
<div class="a" style="left:108px;top:437.1px;width:1059px;height:1px;background:#e8e8e8"></div>
<div class="a" style="left:108px;top:454.5px;width:1059px;height:1px;background:#e8e8e8"></div>
<div class="a" style="left:108px;top:472.1px;width:1059px;height:1px;background:#e8e8e8"></div>
<div class="a" style="left:108px;top:490.2px;width:1059px;height:1px;background:#e8e8e8"></div>
<div class="a" style="left:108px;top:507.8px;width:1059px;height:1px;background:#e8e8e8"></div>
<div class="a" style="left:108px;top:525.9px;width:1059px;height:1px;background:#e8e8e8"></div>
<div class="a" style="left:108px;top:544.3px;width:1059px;height:1px;background:#e8e8e8"></div>
<div class="a" style="left:150.8px;top:188.4px;width:1px;height:359.6px;background:#e8e8e8"></div>
<div class="a" style="left:275.8px;top:188.4px;width:1px;height:359.6px;background:#e8e8e8"></div>
<div class="a" style="left:563.9px;top:188.4px;width:1px;height:359.6px;background:#e8e8e8"></div>
<div class="a" style="left:684.5px;top:188.4px;width:1px;height:359.6px;background:#e8e8e8"></div>
<div class="a" style="left:773.1px;top:188.4px;width:1px;height:359.6px;background:#e8e8e8"></div>
<div class="a" style="left:885.1px;top:188.4px;width:1px;height:359.6px;background:#e8e8e8"></div>
<div class="a" style="left:943.3px;top:188.4px;width:1px;height:359.6px;background:#e8e8e8"></div>
<div class="a" style="left:1000.9px;top:188.4px;width:1px;height:359.6px;background:#e8e8e8"></div>
<div class="a" style="left:1058.0px;top:188.4px;width:1px;height:359.6px;background:#e8e8e8"></div>
<div class="a" style="left:1116.0px;top:188.4px;width:1px;height:359.6px;background:#e8e8e8"></div>
<div class="a" style="left:108.5px;top:208.8px;width:776.6px;height:39.6px;background:#fff"></div>
<div class="a" style="left:108.5px;top:188.9px;width:776.6px;height:19px;background:#fff"></div>
<div class="a" style="left:108.5px;top:299.9px;width:42.3px;height:248px;background:#fff"></div>
<div class="a" style="left:151.8px;top:299.9px;width:124px;height:85px;background:#fff"></div>
<div class="a" style="left:151.8px;top:385.9px;width:124px;height:104.3px;background:#fff"></div>
<div class="a" style="left:151.8px;top:491.2px;width:124px;height:57px;background:#fff"></div>
<div class="a" style="left:564.9px;top:299.9px;width:208.2px;height:248px;background:#fff"></div>
<div class="a" style="left:684.5px;top:299.9px;width:1px;height:248px;background:#f7f7f7"></div>
<div class="a" style="left:774.1px;top:299.9px;width:111px;height:248px;background:#fff"></div>
<div class="a" style="left:564.9px;top:249.4px;width:208.2px;height:49.5px;background:#fff"></div>
<div class="a" style="left:108px;top:248.4px;width:778.1px;height:1px;background:#8a8a8a"></div>
<div class="a" style="left:108px;top:298.9px;width:778.1px;height:1px;background:#484848"></div>
<div class="a" style="left:150.8px;top:248.9px;width:1px;height:299.1px;background:#484848"></div>
<div class="a" style="left:275.8px;top:248.9px;width:1px;height:299.1px;background:#484848"></div>
<div class="a" style="left:563.9px;top:248.9px;width:1px;height:299.1px;background:#484848"></div>
<div class="a" style="left:773.1px;top:248.9px;width:1px;height:299.1px;background:#484848"></div>
<div class="a" style="left:885.1px;top:248.9px;width:1px;height:299.1px;background:#484848"></div>
<div class="a" style="left:151.3px;top:384.9px;width:413.09999999999997px;height:1px;background:#484848"></div>
<div class="a" style="left:151.3px;top:490.2px;width:413.09999999999997px;height:1px;background:#484848"></div>
<div class="a" style="left:276.3px;top:316.2px;width:288.09999999999997px;height:1px;background:#9a9a9a"></div>
<div class="a" style="left:276.3px;top:333.9px;width:288.09999999999997px;height:1px;background:#9a9a9a"></div>
<div class="a" style="left:276.3px;top:351.0px;width:288.09999999999997px;height:1px;background:#484848"></div>
<div class="a" style="left:276.3px;top:368.0px;width:288.09999999999997px;height:1px;background:#484848"></div>
<div class="a" style="left:276.3px;top:402.4px;width:288.09999999999997px;height:1px;background:#9a9a9a"></div>
<div class="a" style="left:276.3px;top:419.5px;width:288.09999999999997px;height:1px;background:#9a9a9a"></div>
<div class="a" style="left:276.3px;top:437.1px;width:288.09999999999997px;height:1px;background:#484848"></div>
<div class="a" style="left:276.3px;top:454.5px;width:288.09999999999997px;height:1px;background:#484848"></div>
<div class="a" style="left:276.3px;top:472.1px;width:288.09999999999997px;height:1px;background:#484848"></div>
<div class="a" style="left:276.3px;top:507.8px;width:288.09999999999997px;height:1px;background:#484848"></div>
<div class="a" style="left:276.3px;top:525.9px;width:288.09999999999997px;height:1px;background:#484848"></div>
<div class="a" style="left:276.3px;top:544.3px;width:288.09999999999997px;height:1px;background:#9a9a9a"></div>
<div class="a t" style="left:111px;top:191.5px;font-size:15px;line-height:15px;color:#000;letter-spacing:0.6px;font-family:&quot;Liberation Serif&quot;,serif">附件1：</div>
<div class="a t" style="left:138px;top:218.7px;font-size:23px;line-height:23px;color:#111;letter-spacing:0.15px">对外经济贸易大学新时代高质量发展思想大讨论工作安排（金融学院）</div>
<div class="a t" style="left:99.4px;top:266.5px;font-size:17px;line-height:17px;width:60px;text-align:center;color:#111;letter-spacing:-0.1px">序号</div>
<div class="a t" style="left:153.5px;top:266.5px;font-size:17px;line-height:17px;width:120px;text-align:center;color:#111;letter-spacing:-0.1px">讨论主题</div>
<div class="a t" style="left:320.3px;top:266.5px;font-size:17px;line-height:17px;width:200px;text-align:center;color:#111;letter-spacing:-0.1px">讨论内容</div>
<div class="a t" style="left:574.0px;top:266.5px;font-size:17px;line-height:17px;width:100px;text-align:center;color:#111;letter-spacing:-0.1px">时间</div>
<div class="a t" style="left:678.3px;top:266.5px;font-size:17px;line-height:17px;width:100px;text-align:center;color:#111;letter-spacing:-0.1px">形式</div>
<div class="a t" style="left:769.2px;top:266.5px;font-size:17px;line-height:17px;width:120px;text-align:center;color:#111;letter-spacing:-0.1px">参加人员范围</div>
<div class="a t" style="left:109.4px;top:434.5px;font-size:13px;line-height:13px;width:40px;text-align:center;color:#1a1a1a;letter-spacing:0.64px;font-family:&quot;Liberation Serif&quot;,serif">1</div>
<div class="a t" style="left:163.7px;top:337.0px;font-size:13px;line-height:13px;width:100px;text-align:center;color:#1a1a1a;letter-spacing:0.64px;font-family:&quot;Liberation Serif&quot;,serif">本科生教学</div>
<div class="a t" style="left:163.7px;top:432.1px;font-size:13px;line-height:13px;width:100px;text-align:center;color:#1a1a1a;letter-spacing:0.64px;font-family:&quot;Liberation Serif&quot;,serif">研究生培养</div>
<div class="a t" style="left:163.7px;top:528.5px;font-size:13px;line-height:13px;width:100px;text-align:center;color:#1a1a1a;letter-spacing:0.64px;font-family:&quot;Liberation Serif&quot;,serif">科学研究</div>
<div class="a t" style="left:276.8px;top:302.7px;font-size:13px;line-height:13px;color:#1a1a1a;letter-spacing:0.64px;font-family:&quot;Liberation Serif&quot;,serif"><span style="letter-spacing:1.55px">（1）</span>如何建设一批有影响力的金融专业教材？</div>
<div class="a t" style="left:276.8px;top:320.4px;font-size:13px;line-height:13px;color:#1a1a1a;letter-spacing:0.64px;font-family:&quot;Liberation Serif&quot;,serif"><span style="letter-spacing:1.55px">（2）</span>如何建设一批有影响力的金融专业课程？</div>
<div class="a t" style="left:276.8px;top:337.5px;font-size:13px;line-height:13px;color:#1a1a1a;letter-spacing:0.64px;font-family:&quot;Liberation Serif&quot;,serif"><span style="letter-spacing:1.55px">（3）</span>如何在拔尖创新人才培养上能有所突破？</div>
<div class="a t" style="left:276.8px;top:354.5px;font-size:13px;line-height:13px;color:#1a1a1a;letter-spacing:0.64px;font-family:&quot;Liberation Serif&quot;,serif"><span style="letter-spacing:1.55px">（4）</span>为什么有些教师的教学工作量不能达标？</div>
<div class="a t" style="left:276.8px;top:371.4px;font-size:13px;line-height:13px;color:#1a1a1a;letter-spacing:0.64px;font-family:&quot;Liberation Serif&quot;,serif"><span style="letter-spacing:1.55px">（5）</span>为什么有些课程长期从院外聘主讲教师？</div>
<div class="a t" style="left:276.8px;top:388.9px;font-size:13px;line-height:13px;color:#1a1a1a;letter-spacing:0.64px;font-family:&quot;Liberation Serif&quot;,serif"><span style="letter-spacing:1.55px">（1）</span>如何有效分类培养科学硕士和专业硕士？</div>
<div class="a t" style="left:276.8px;top:406.0px;font-size:13px;line-height:13px;color:#1a1a1a;letter-spacing:0.64px;font-family:&quot;Liberation Serif&quot;,serif"><span style="letter-spacing:1.55px">（2）</span>如何加强指导，提升学位论文整体质量？</div>
<div class="a t" style="left:276.8px;top:423.6px;font-size:13px;line-height:13px;color:#1a1a1a;letter-spacing:0.64px;font-family:&quot;Liberation Serif&quot;,serif"><span style="letter-spacing:1.55px">（3）</span>专硕除了全国体量最大，还应有何亮点？</div>
<div class="a t" style="left:276.8px;top:441.0px;font-size:13px;line-height:13px;color:#1a1a1a;letter-spacing:0.64px;font-family:&quot;Liberation Serif&quot;,serif"><span style="letter-spacing:1.55px">（4）</span>如何界定研究生与指导教师之间的边界？</div>
<div class="a t" style="left:276.8px;top:458.6px;font-size:13px;line-height:13px;color:#1a1a1a;letter-spacing:0.64px;font-family:&quot;Liberation Serif&quot;,serif"><span style="letter-spacing:1.55px">（5）</span>如何优化研究生与指导教师的双向选择？</div>
<div class="a t" style="left:276.8px;top:476.7px;font-size:13px;line-height:13px;color:#1a1a1a;letter-spacing:0.64px;font-family:&quot;Liberation Serif&quot;,serif"><span style="letter-spacing:1.55px">（6）</span>博士研究生天天都在忙，为啥不出成果？</div>
<div class="a t" style="left:276.8px;top:494.3px;font-size:13px;line-height:13px;color:#1a1a1a;letter-spacing:0.64px;font-family:&quot;Liberation Serif&quot;,serif"><span style="letter-spacing:1.55px">（1）</span>不乏顶级论文却为何缺少有影响力学者？</div>
<div class="a t" style="left:276.8px;top:512.4px;font-size:13px;line-height:13px;color:#1a1a1a;letter-spacing:0.64px;font-family:&quot;Liberation Serif&quot;,serif"><span style="letter-spacing:1.55px">（2）</span>如何加强有组织的科研尤其是智库建设？</div>
<div class="a t" style="left:276.8px;top:530.8px;font-size:13px;line-height:13px;color:#1a1a1a;letter-spacing:0.64px;font-family:&quot;Liberation Serif&quot;,serif"><span style="letter-spacing:1.55px">（3）</span>如何使科学研究的生产力具有可持续性？</div>
<div class="a t" style="left:558.5px;top:434.0px;font-size:13px;line-height:13px;width:130px;text-align:center;color:#1a1a1a;letter-spacing:0.64px;font-family:&quot;Liberation Serif&quot;,serif">7月中旬至8月中旬</div>
<div class="a t" style="left:678.3px;top:434.0px;font-size:13px;line-height:13px;width:100px;text-align:center;color:#1a1a1a;letter-spacing:0.64px;font-family:&quot;Liberation Serif&quot;,serif">分组学习研讨</div>
<div class="a t" style="left:779.4px;top:479.5px;font-size:13px;line-height:13px;width:100px;text-align:center;color:#1a1a1a;letter-spacing:0.64px;font-family:&quot;Liberation Serif&quot;,serif">全院教师</div>
<svg style="left:531px;top:453px" width="10" height="18" viewBox="0 0 10 18"><path d="M2 0.8h6M5 0.8v15.5M2 16.3h6" fill="none" stroke="#111" stroke-width="1.3"/></svg>
<div class="a" style="left:1167px;top:172px;width:16px;height:376px;background:#e6e6e6"></div>
<div class="a" style="left:1167.5px;top:173px;width:14.5px;height:15px;background:#fff;border:1px solid #a9a9a9"></div>
<svg style="left:1171px;top:178.5px" width="8" height="5" viewBox="0 0 8 5"><path d="M0 4.5L4 0.5 8 4.5z" fill="#666"/></svg>
<div class="a" style="left:1167.5px;top:188px;width:14.5px;height:205.5px;background:#fff;border:1px solid #a9a9a9"></div>
<div class="a" style="left:1167.5px;top:533.5px;width:14.5px;height:15px;background:#fff;border:1px solid #a9a9a9"></div>
<svg style="left:1171px;top:538.5px" width="8" height="5" viewBox="0 0 8 5"><path d="M0 0.5h8L4 4.5z" fill="#666"/></svg>
<div class="a" style="left:85px;top:548px;width:1098px;height:17px;background:#e6e6e6;border-top:1px solid #d0d0d0"></div>
<div class="a" style="left:145px;top:548px;width:91px;height:15.5px;background:#fff"></div>
<div class="a" style="left:145px;top:563px;width:91px;height:1.5px;background:#217346"></div>
<div class="a t" style="left:149.5px;top:549.5px;font-size:11.5px;line-height:11.5px;color:#1c5e36;font-weight:bold;letter-spacing:-0.25px">各单位实施方案</div>
<svg style="left:255.5px;top:550.5px" width="14" height="14" viewBox="0 0 14 14"><circle cx="7" cy="7" r="6.2" fill="none" stroke="#777" stroke-width="1"/><path d="M7 3.5v7M3.5 7h7" stroke="#666" stroke-width="1.2"/></svg>
<div class="a" style="left:742px;top:553px;width:1px;height:1.5px;background:#b0b0b0"></div>
<div class="a" style="left:742px;top:556px;width:1px;height:1.5px;background:#b0b0b0"></div>
<div class="a" style="left:742px;top:559px;width:1px;height:1.5px;background:#b0b0b0"></div>
<div class="a" style="left:752.5px;top:549.5px;width:14px;height:14px;background:#fff;border:1px solid #a9a9a9"></div>
<svg style="left:757px;top:553px" width="5" height="8" viewBox="0 0 5 8"><path d="M4.5 0v8L0.5 4z" fill="#555"/></svg>
<div class="a" style="left:766px;top:549.5px;width:348px;height:14px;background:#fff;border:1px solid #a9a9a9"></div>
<div class="a" style="left:1153.5px;top:549.5px;width:13.5px;height:14px;background:#fff;border:1px solid #a9a9a9"></div>
<svg style="left:1158px;top:553px" width="5" height="8" viewBox="0 0 5 8"><path d="M0.5 0v8L4.5 4z" fill="#555"/></svg>
<div class="a" style="left:85px;top:565px;width:1098px;height:19px;background:#f3f3f3"></div>
<div class="a t" style="left:88.5px;top:569px;font-size:11px;line-height:11px;color:#222">就绪</div>
<svg style="left:129px;top:569px" width="12" height="11" viewBox="0 0 12 11"><circle cx="5" cy="5.5" r="4.5" fill="none" stroke="#222" stroke-dasharray="1.5 1"/><path d="M5 3l6 7M11 3l-6 7" stroke="#222" stroke-width="1.1"/></svg>
<div class="a t" style="left:143px;top:569px;font-size:11px;line-height:11px;color:#222;letter-spacing:-0.3px">辅助功能: 调查</div>
<svg style="left:101px;top:553px" width="24" height="9" viewBox="0 0 24 9"><path d="M5 0.5L1 4.5 5 8.5" fill="none" stroke="#aaa"/><path d="M19 0.5l4 4-4 4" fill="none" stroke="#999"/></svg>
<div class="a" style="left:923px;top:565.5px;width:34px;height:18.5px;background:#c6c6c6"></div>
<svg style="left:934px;top:570px" width="11" height="11" viewBox="0 0 11 11"><rect x="0.5" y="0.5" width="10" height="10" fill="none" stroke="#666"/><path d="M3.8 0.5v10M7.2 0.5v10M0.5 3.8h10M0.5 7.2h10" stroke="#666"/></svg>
<svg style="left:968px;top:570px" width="12" height="11" viewBox="0 0 12 11"><rect x="0.5" y="0.5" width="11" height="10" fill="none" stroke="#777"/><rect x="3" y="2.5" width="6" height="6" fill="none" stroke="#777"/></svg>
<svg style="left:1003px;top:570px" width="12" height="11" viewBox="0 0 12 11"><path d="M0.5 0.5v10h11V0.5M0.5 6.5h11M5.5 0.5v6" fill="none" stroke="#777"/></svg>
<div class="a" style="left:1031px;top:574.5px;width:6px;height:1px;background:#777"></div>
<div class="a" style="left:1042px;top:574.5px;width:85px;height:1px;background:#666"></div>
<div class="a" style="left:1083px;top:571.3px;width:4px;height:8.2px;background:#555"></div>
<div class="a" style="left:1132px;top:574.5px;width:6.5px;height:1px;background:#777"></div>
<div class="a" style="left:1134.7px;top:571.8px;width:1px;height:6.5px;background:#777"></div>
<div class="a t" style="left:1150px;top:570px;font-size:11px;line-height:11px;color:#333">100%</div>
<div class="a" style="left:85px;top:584.5px;width:1098px;height:2.5px;background:linear-gradient(90deg,#3c4a5c 0%,#56667a 20%,#8a9ab0 32%,#4a5a6e 45%,#c0703a 54%,#4a5a6e 57%,#c86a30 62%,#6a7a90 66%,#56667a 80%,#c8743a 88%,#4a5a6e 91%,#5a6a80 100%)"></div>
<div class="a" style="left:471px;top:569px;width:326px;height:6.5px;border-radius:4px;background:#454545"></div>
<div class="a" style="left:628.5px;top:567px;width:10px;height:10px;border-radius:50%;background:#5a5a5a;opacity:0.8"></div>
<div class="a" style="left:653px;top:567px;width:10px;height:10px;border-radius:50%;background:#5a5a5a;opacity:0.8"></div>
<div class="a" style="left:100px;top:551px;width:131px;height:33.7px;background:rgba(62,62,62,0.72)"></div>
<div class="a" style="left:64px;top:551px;width:36px;height:36px;background:#fb7f1a"></div>
<svg style="left:64px;top:551px" width="36" height="36" viewBox="0 0 36 36"><circle cx="18.7" cy="12.2" r="4.8" fill="#fff"/><path d="M7.8 28.7q0-7.5 6-10l4.9 3.5 4.9-3.5q6 2.5 6 10z" fill="#fff"/></svg>
<svg style="left:105px;top:559px" width="20" height="21" viewBox="0 0 20 21"><rect x="6.5" y="1" width="7" height="11" rx="3.5" fill="#fff"/><path d="M3.5 8.5a6.5 6.5 0 0 0 13 0" fill="none" stroke="#fff" stroke-width="1.6"/><path d="M10 15v4M6.5 19.5h7" stroke="#fff" stroke-width="1.6"/><path d="M2 19L18 3" stroke="#f0584a" stroke-width="2"/></svg>
<div class="a t" style="left:131px;top:563px;font-size:13.5px;line-height:13.5px;color:#fff">席丹的屏幕共享</div>
<svg style="left:1125px;top:471px" width="67" height="67" viewBox="0 0 67 67"><circle cx="33.5" cy="33.5" r="32.8" fill="#2e2e31"/>
<rect x="26.5" y="15.5" width="13" height="28" rx="6.5" fill="#fff"/>
<path d="M21.5 32a12 12 0 0 0 24 0" fill="none" stroke="#fff" stroke-width="2.4"/>
<path d="M33.5 44v6M25.5 51h16" stroke="#fff" stroke-width="2.4"/>
<path d="M18 50L49 19" stroke="#2e2e31" stroke-width="5"/><path d="M19 49L48 20" stroke="#f0584a" stroke-width="2.6"/>
</svg>
</body></html>
